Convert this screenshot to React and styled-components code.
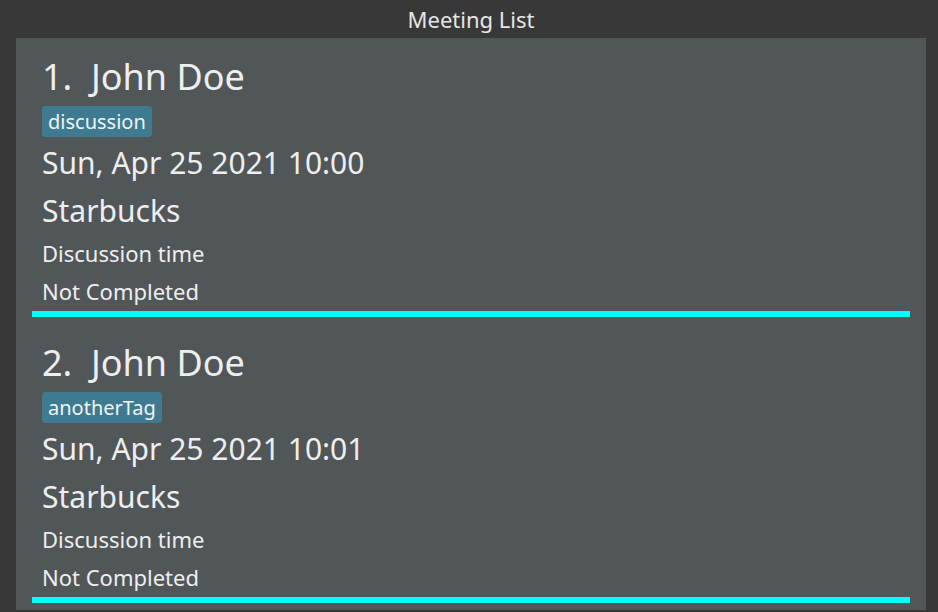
import React from "react";
import styled, { createGlobalStyle } from "styled-components";

const Global = createGlobalStyle`
  html, body { margin: 0; padding: 0; background: #383838; }
  body { font-family: "Noto Sans", "Open Sans", sans-serif; }
  * { box-sizing: border-box; }
`;

const Page = styled.div`
  width: 938px;
  height: 612px;
  background: #383838;
  display: flex;
  flex-direction: column;
  overflow: hidden;
`;

const Header = styled.div`
  height: 38px;
  flex-shrink: 0;
  display: flex;
  align-items: center;
  justify-content: center;
  color: #e6e6e6;
  font-size: 22px;
  padding-left: 4px;
`;

const Panel = styled.div`
  margin: 0 12px 2px 16px;
  flex: 1;
  background: #515658;
  display: flex;
  flex-direction: column;
  overflow: hidden;
`;

const Card = styled.div`
  padding: 0 16px;
  height: 286px;
  flex-shrink: 0;
  display: flex;
  flex-direction: column;
`;

const Body = styled.div`
  flex: 1;
  padding: 12px 0 0 10px;
  display: flex;
  flex-direction: column;
  align-items: flex-start;
  color: #eeeeee;
`;

const Name = styled.div`
  font-size: 36px;
  line-height: 54px;
  white-space: pre;
`;

const Tag = styled.span`
  background: #3e7b91;
  color: #f2f2f2;
  font-size: 20px;
  line-height: 31px;
  height: 31px;
  padding: 0 6px;
  border-radius: 3px;
  margin: 2px 0 2px;
`;

const Line = styled.div`
  font-size: ${(p) => p.$size}px;
  line-height: ${(p) => p.$lh}px;
  white-space: nowrap;
`;

const Divider = styled.div`
  height: 6px;
  flex-shrink: 0;
  background: #00ffff;
  margin-bottom: 8px;
`;

const meetings = [
  { idx: 1, name: "John Doe", tag: "discussion", time: "Sun, Apr 25 2021 10:00" },
  { idx: 2, name: "John Doe", tag: "anotherTag", time: "Sun, Apr 25 2021 10:01" },
];

export default function App() {
  return (
    <Page>
      <Global />
      <Header>Meeting List</Header>
      <Panel>
        {meetings.map((m) => (
          <Card key={m.idx}>
            <Body>
              <Name>{`${m.idx}.  ${m.name}`}</Name>
              <Tag>{m.tag}</Tag>
              <Line $size={30} $lh={48}>{m.time}</Line>
              <Line $size={30} $lh={48}>Starbucks</Line>
              <Line $size={22} $lh={36}>Discussion time</Line>
              <Line $size={22} $lh={40}>Not Completed</Line>
            </Body>
            <Divider />
          </Card>
        ))}
      </Panel>
    </Page>
  );
}
